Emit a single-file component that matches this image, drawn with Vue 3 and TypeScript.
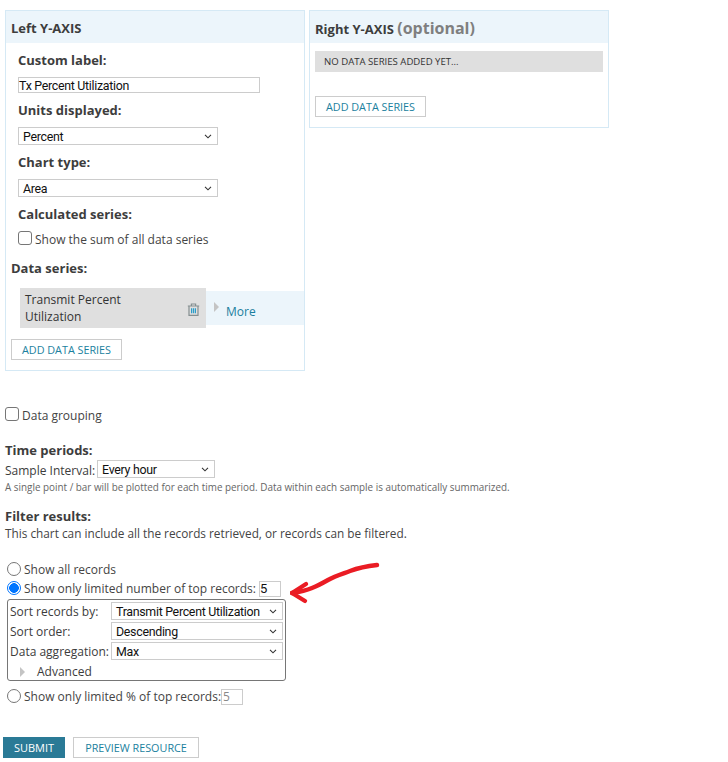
<script setup lang="ts">
const sortRows = [
  { label: 'Sort records by:', value: 'Transmit Percent Utilization' },
  { label: 'Sort order:', value: 'Descending' },
  { label: 'Data aggregation:', value: 'Max' },
]
</script>

<template>
  <div class="page">
    <div class="panels">
      <section class="panel left-panel">
        <h3 class="panel-head">Left Y-AXIS</h3>
        <div class="field-block">
          <div class="label">Custom label:</div>
          <div class="text-input label-input">Tx Percent Utilization</div>
          <div class="label">Units displayed:</div>
          <div class="select units-select">
            <span>Percent</span>
            <svg class="chev" width="8" height="5" viewBox="0 0 8 5"><path d="M1 .8 4 3.8 7 .8" /></svg>
          </div>
          <div class="label">Chart type:</div>
          <div class="select units-select">
            <span>Area</span>
            <svg class="chev" width="8" height="5" viewBox="0 0 8 5"><path d="M1 .8 4 3.8 7 .8" /></svg>
          </div>
          <div class="label">Calculated series:</div>
          <label class="check-row"><span class="checkbox"></span>Show the sum of all data series</label>
        </div>
        <div class="label series-label">Data series:</div>
        <div class="series-row">
          <div class="series-name">
            <span>Transmit Percent Utilization</span>
            <svg class="trash" width="13" height="13" viewBox="0 0 13 13" fill="none" stroke="#858f91" stroke-width="1.2">
              <path d="M.8 3h11.4M4.4 3V1h4.2V3M2 3v9.4h9V3" />
              <path d="M4.6 5.2v5M6.5 5.2v5M8.4 5.2v5" stroke="#2b9dc9" />
            </svg>
          </div>
          <div class="series-more"><i class="tri"></i><a>More</a></div>
        </div>
        <button class="btn add-btn">ADD DATA SERIES</button>
      </section>

      <section class="panel right-panel">
        <h3 class="panel-head">Right Y-AXIS <span class="optional">(optional)</span></h3>
        <div class="no-series">NO DATA SERIES ADDED YET...</div>
        <button class="btn right-add">ADD DATA SERIES</button>
      </section>
    </div>

    <label class="check-row grouping"><span class="checkbox"></span>Data grouping</label>

    <div class="label time-label">Time periods:</div>
    <div class="sample-row">
      <span class="sample-label">Sample Interval:</span>
      <div class="select interval-select">
        <span>Every hour</span>
        <svg class="chev" width="8" height="5" viewBox="0 0 8 5"><path d="M1 .8 4 3.8 7 .8" /></svg>
      </div>
    </div>
    <div class="hint">A single point / bar will be plotted for each time period. Data within each sample is automatically summarized.</div>

    <div class="label filter-label">Filter results:</div>
    <div class="filter-text">This chart can include all the records retrieved, or records can be filtered.</div>

    <div class="filter-options">
      <label class="radio-row"><span class="radio"></span>Show all records</label>
      <label class="radio-row">
        <span class="radio on"></span>Show only limited number of top records:
        <span class="num-input dark">5</span>
      </label>
      <div class="limit-box">
        <div v-for="row in sortRows" :key="row.label" class="limit-row">
          <span class="limit-label">{{ row.label }}</span>
          <div class="select limit-select">
            <span>{{ row.value }}</span>
            <svg class="chev" width="8" height="5" viewBox="0 0 8 5"><path d="M1 .8 4 3.8 7 .8" /></svg>
          </div>
        </div>
        <div class="advanced"><i class="tri"></i>Advanced</div>
      </div>
      <label class="radio-row third">
        <span class="radio"></span>Show only limited % of top records:<span class="num-input">5</span>
      </label>
    </div>

    <div class="actions">
      <button class="btn submit">SUBMIT</button>
      <button class="btn preview">PREVIEW RESOURCE</button>
    </div>

    <!-- hand drawn annotation on top of the form -->
    <svg class="arrow" width="92" height="46" viewBox="0 0 92 46" fill="none" stroke="#ea1c24" stroke-linecap="round" stroke-linejoin="round">
      <path d="M87 4C78 5 68 7 60 10 52 13 45 15 38 19 31 23 27 25 22 27 15 30 9 31 2 32" stroke-width="4.4" />
      <path d="M16 23 2 32 15 40" stroke-width="4.2" />
    </svg>
  </div>
</template>

<style>
html, body { margin: 0; background: #fff; }
</style>

<style scoped>
.page { position: relative; width: 728px; height: 762px; overflow: hidden; font-family: "Open Sans", "Noto Sans", sans-serif; font-size: 12px; color: #3c3c3c; }
.panels { display: flex; align-items: flex-start; gap: 4px; padding: 10px 0 0 5px; }
.panel { width: 300px; box-sizing: border-box; border: 1px solid #d5e9f5; }
.left-panel { height: 361px; }
.right-panel { height: 118px; }
.panel-head { margin: 0; height: 32px; padding-left: 5px; background: #ecf5fb; font-size: 13px; line-height: 34px; font-weight: 700; color: #3d3d3d; }
.optional { font-size: 16px; color: #7f7f7f; }
.field-block { padding-left: 12px; }
.label { font-size: 13px; font-weight: 700; line-height: 18px; color: #3d3d3d; }
.field-block .label:first-child { margin-top: 8px; }
.text-input { box-sizing: border-box; width: 242px; height: 16px; margin: 8px 0 8px; padding-top: 1px; border: 1px solid #ccc; font-family: Roboto, sans-serif; font-size: 12.4px; letter-spacing: -.3px; line-height: 14px; color: #111; }
.select { display: flex; align-items: center; justify-content: space-between; box-sizing: border-box; padding-top: 1px; border: 1px solid #ccc; background: #fff; font-family: Roboto, sans-serif; font-size: 12.4px; letter-spacing: -.3px; color: #111; }
.chev { fill: none; stroke: #333; stroke-width: 1.1; }
.units-select { width: 200px; height: 18px; margin: 8px 0; padding-left: 4px; padding-right: 5px; }
.check-row { display: flex; align-items: center; gap: 3px; font-size: 12px; color: #444; }
.field-block .check-row { margin-top: 8px; }
.checkbox { box-sizing: border-box; width: 14px; height: 14px; margin-top: -4px; border: 1px solid #767676; border-radius: 3px; background: #fff; }
.series-label { margin: 11px 0 0 5px; }
.series-row { display: flex; align-items: center; margin: 11px 0 0 14px; }
.series-name { display: flex; align-items: center; justify-content: space-between; box-sizing: border-box; width: 186px; height: 40px; padding: 0 6px 0 5px; background: #dfdfdf; font-size: 12px; line-height: 17px; color: #333; }
.series-name span { width: 110px; }
.trash { margin-top: 2px; }
.series-more { position: relative; flex: 1; height: 34px; background: #ecf5fb; }
.series-more a { position: absolute; left: 20px; top: 13px; font-size: 12px; line-height: 16px; color: #1b7f9e; }
.tri { display: block; width: 0; height: 0; border-left: 5px solid #c4c4c4; border-top: 5px solid transparent; border-bottom: 5px solid transparent; }
.series-more .tri { position: absolute; left: 8px; top: 11px; }
.btn { box-sizing: border-box; height: 21px; padding: 0; border: 1px solid #ccc; background: #fff; font-family: "Open Sans", sans-serif; font-size: 10.8px; line-height: 19px; color: #1b7f9e; }
.add-btn { display: block; width: 111px; margin: 11px 0 0 5px; }
.no-series { height: 21px; margin: 8px 5px 0; padding-left: 9px; background: #dfdfdf; font-size: 9.6px; line-height: 21px; color: #333; }
.right-add { display: block; width: 111px; margin: 24px 0 0 5px; }
.grouping { margin: 36px 0 0 5px; }
.time-label { margin: 17px 0 0 5px; }
.sample-row { display: flex; align-items: center; gap: 2px; height: 18px; margin: 1px 0 0 5px; font-size: 12px; }
.sample-label { padding-top: 2px; }
.interval-select { width: 118px; height: 18px; padding-left: 4px; padding-right: 5px; }
.hint { margin: 2px 0 0 5px; font-size: 9.9px; line-height: 14px; color: #666; white-space: nowrap; }
.filter-label { margin: 13px 0 0 5px; }
.filter-text { margin: 0 0 0 5px; font-size: 11.8px; line-height: 17px; color: #444; }
.filter-options { margin: 18px 0 0 7px; }
.radio-row { display: flex; align-items: center; gap: 3px; height: 19px; font-size: 12px; color: #444; }
.radio { box-sizing: border-box; width: 14px; height: 14px; margin-top: -2px; border: 1px solid #767676; border-radius: 50%; background: #fff; }
.radio.on { border: 1px solid #0075ff; background: radial-gradient(circle, #0075ff 0 4.6px, #fff 5px); }
.num-input { box-sizing: border-box; width: 22px; height: 16px; padding-left: 1px; border: 1px solid #ccc; font-size: 12px; line-height: 14px; color: #888; }
.num-input.dark { padding-left: 0; font-family: Roboto, sans-serif; font-size: 13px; color: #111; }
.limit-box { box-sizing: border-box; width: 279px; height: 82px; margin-top: 1px; padding: 1px 2px 0 2px; border: 1px solid #767676; border-radius: 3px; }
.limit-row { display: flex; align-items: center; justify-content: space-between; height: 20px; font-size: 12px; }
.limit-select { width: 172px; height: 18px; padding-left: 4px; padding-right: 5px; }
.advanced { display: flex; align-items: center; gap: 12px; height: 19px; margin-top: 1px; padding-left: 10px; font-size: 12px; }
.third { margin-top: 6px; }
.third .num-input { margin-left: -3px; }
.actions { display: flex; gap: 8px; margin: 31px 0 0 3px; }
.submit { width: 62px; border-color: #2a7a96; background: #2a7a96; color: #fff; font-size: 11px; }
.preview { width: 126px; font-size: 10.8px; }
.arrow { position: absolute; left: 290px; top: 561px; }
</style>
